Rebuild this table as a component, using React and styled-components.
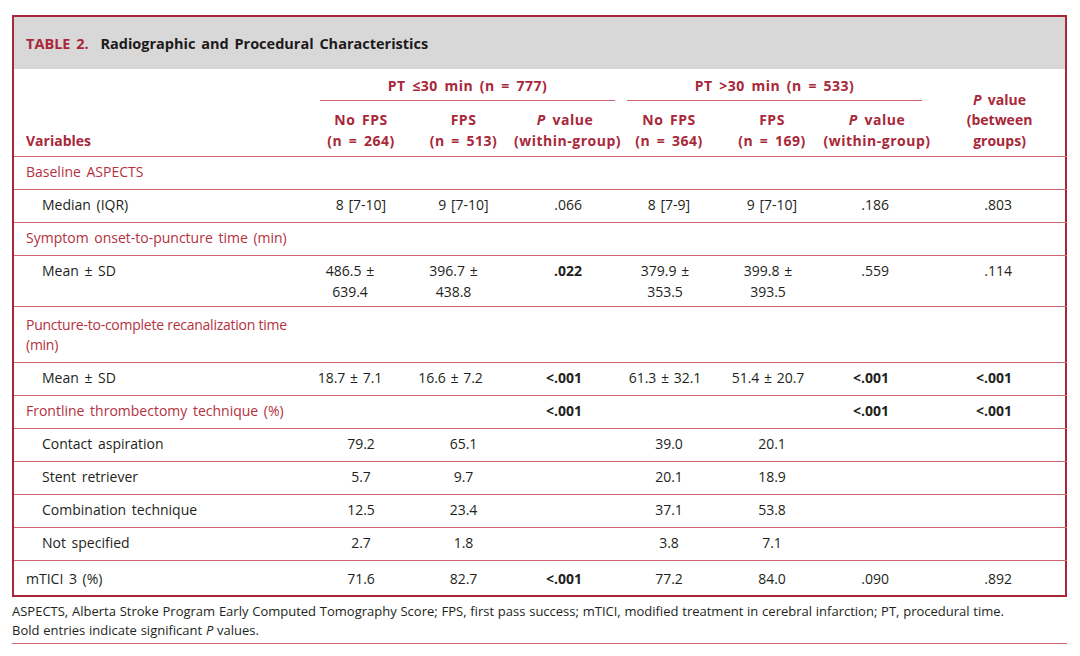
import React from "react";
import styled, { createGlobalStyle } from "styled-components";

const RED = "#a8283a";
const LINE = "#cf6670";

const GlobalStyle = createGlobalStyle`
  body {
    margin: 0;
    background: #fff;
    font-family: "Open Sans", "Liberation Sans", sans-serif;
    color: #231f20;
  }
`;

// right padding for the P value columns (decimal aligned), 0 = centred
const pPad = [0, 0, 34, 0, 0, 43, 55];

const rows = [
  { kind: "section", label: "Baseline ASPECTS" },
  { label: "Median (IQR)", values: ["8 [7-10]", "9 [7-10]", ".066", "8 [7-9]", "9 [7-10]", ".186", ".803"] },
  { kind: "section", label: "Symptom onset-to-puncture time (min)" },
  {
    label: "Mean ± SD",
    values: ["486.5 ±\n639.4", "396.7 ±\n438.8", ".022", "379.9 ±\n353.5", "399.8 ±\n393.5", ".559", ".114"],
    bold: [2],
    shift: [22, 20, 0, 8, 8, 0, 0],
    pad: "4px 0 4px",
    lh: 21,
  },
  {
    kind: "section",
    label: "Puncture-to-complete recanalization time\n(min)",
    tight: true,
    pad: "8px 0 8px",
    lh: 19.5,
  },
  {
    label: "Mean ± SD",
    values: ["18.7 ± 7.1", "16.6 ± 7.2", "<.001", "61.3 ± 32.1", "51.4 ± 20.7", "<.001", "<.001"],
    bold: [2, 5, 6],
    shift: [22, 26, 0, 8, 8, 0, 0],
  },
  {
    kind: "section",
    label: "Frontline thrombectomy technique (%)",
    values: ["", "", "<.001", "", "", "<.001", "<.001"],
    bold: [2, 5, 6],
  },
  { label: "Contact aspiration", values: ["79.2", "65.1", "", "39.0", "20.1", "", ""] },
  { label: "Stent retriever", values: ["5.7", "9.7", "", "20.1", "18.9", "", ""] },
  { label: "Combination technique", values: ["12.5", "23.4", "", "37.1", "53.8", "", ""] },
  { label: "Not specified", values: ["2.7", "1.8", "", "3.8", "7.1", "", ""] },
  {
    kind: "plain",
    label: "mTICI 3 (%)",
    values: ["71.6", "82.7", "<.001", "77.2", "84.0", ".090", ".892"],
    bold: [2],
    last: true,
    pad: "8px 0 6px",
  },
];

const widths = [295, 104, 101, 102, 106, 100, 110, 135];

function PVal() {
  return (
    <>
      <i>P</i> value
    </>
  );
}

export default function App() {
  return (
    <>
      <GlobalStyle />
      <Page>
        <Frame>
          <TitleBar>
            <TableNo>TABLE 2.</TableNo> Radiographic and Procedural Characteristics
          </TitleBar>
          <Table>
            <colgroup>
              {widths.map((w, i) => (
                <col key={i} style={{ width: w }} />
              ))}
            </colgroup>
            <thead>
              <tr>
                <HeadCell rowSpan={2} $align="left">
                  Variables
                </HeadCell>
                <GroupCell colSpan={3}>
                  <GroupLabel $left="11px" $right="1px">
                    PT ≤30 min (n = 777)
                  </GroupLabel>
                </GroupCell>
                <GroupCell colSpan={3}>
                  <GroupLabel $left="11px" $right="10px">
                    PT &gt;30 min (n = 533)
                  </GroupLabel>
                </GroupCell>
                <HeadCell rowSpan={2}>
                  <PVal />
                  <br />
                  (between
                  <br />
                  groups)
                </HeadCell>
              </tr>
              <tr>
                <SubHead>
                  No FPS
                  <br />
                  (n = 264)
                </SubHead>
                <SubHead>
                  FPS
                  <br />
                  (n = 513)
                </SubHead>
                <SubHead>
                  <PVal />
                  <br />
                  (within-group)
                </SubHead>
                <SubHead>
                  No FPS
                  <br />
                  (n = 364)
                </SubHead>
                <SubHead>
                  FPS
                  <br />
                  (n = 169)
                </SubHead>
                <SubHead>
                  <PVal />
                  <br />
                  (within-group)
                </SubHead>
              </tr>
            </thead>
            <tbody>
              {rows.map((r, i) => (
                <Row key={i} $last={r.last}>
                  <LabelCell $kind={r.kind || "item"} $tight={r.tight} $pad={r.pad} $lh={r.lh}>
                    {r.label}
                  </LabelCell>
                  {widths.slice(1).map((_, j) => (
                    <ValueCell
                      key={j}
                      $bold={r.bold && r.bold.includes(j)}
                      $right={pPad[j]}
                      $shift={r.shift ? r.shift[j] : 0}
                      $pad={r.pad}
                      $lh={r.lh}
                    >
                      {r.values ? r.values[j] : ""}
                    </ValueCell>
                  ))}
                </Row>
              ))}
            </tbody>
          </Table>
        </Frame>
        <Notes>
          <NoteLine>
            ASPECTS, Alberta Stroke Program Early Computed Tomography Score; FPS, first pass success; mTICI, modified
            treatment in cerebral infarction; PT, procedural time.
          </NoteLine>
          <NoteLine>
            Bold entries indicate significant <i>P</i> values.
          </NoteLine>
        </Notes>
      </Page>
    </>
  );
}

const Page = styled.div`
  padding: 15px 13px 0 12px;
  width: 1055px;
`;

const Frame = styled.div`
  border: 2px solid ${RED};
`;

const TitleBar = styled.div`
  background: #d9d8d9;
  height: 52px;
  display: flex;
  align-items: center;
  gap: 6px;
  padding: 0 0 0 12px;
  box-sizing: border-box;
  font-size: 14.5px;
  font-weight: 700;
  word-spacing: 2px;
  color: #1e1a1b;
  white-space: pre;
`;

const TableNo = styled.span`
  color: ${RED};
`;

const Table = styled.table`
  width: 100%;
  table-layout: fixed;
  border-collapse: collapse;
  font-size: 14px;
`;

const HeadCell = styled.th`
  font-weight: 700;
  color: ${RED};
  line-height: 20.5px;
  word-spacing: 2.5px;
  vertical-align: bottom;
  text-align: ${(p) => p.$align || "center"};
  padding: 0 0 5px ${(p) => (p.$align === "left" ? "12px" : "0")};
  border-bottom: 1px solid ${LINE};
  white-space: nowrap;
`;

const GroupCell = styled.th`
  padding: 6px 0 0;
  vertical-align: top;
`;

const GroupLabel = styled.div`
  margin: 0 ${(p) => p.$right} 0 ${(p) => p.$left};
  padding-bottom: 4px;
  border-bottom: 1.5px solid ${LINE};
  font-weight: 700;
  color: ${RED};
  line-height: 21px;
  letter-spacing: 0.5px;
  word-spacing: 2.5px;
  text-align: center;
  white-space: nowrap;
`;

const SubHead = styled.th`
  font-weight: 700;
  color: ${RED};
  line-height: 20.5px;
  letter-spacing: 0.5px;
  word-spacing: 2.5px;
  padding: 9px 0 5px;
  text-align: center;
  vertical-align: bottom;
  border-bottom: 1px solid ${LINE};
  white-space: nowrap;
`;

const Row = styled.tr`
  border-bottom: ${(p) => (p.$last ? "none" : `1px solid ${LINE}`)};
`;

const LabelCell = styled.td`
  padding: ${(p) => p.$pad || "5px 0 7px"};
  padding-left: ${(p) => (p.$kind === "item" ? "28px" : "12px")};
  padding-right: 12px;
  line-height: ${(p) => p.$lh || 20}px;
  color: ${(p) => (p.$kind === "section" ? "#b43141" : "#231f20")};
  letter-spacing: ${(p) => (p.$tight ? "-0.25px" : "0")};
  word-spacing: ${(p) => (p.$tight ? "0" : "2px")};
  white-space: pre-line;
  vertical-align: top;
`;

const ValueCell = styled.td`
  padding: ${(p) => p.$pad || "5px 0 7px"};
  padding-right: ${(p) => (p.$right ? p.$right : p.$shift)}px;
  line-height: ${(p) => p.$lh || 20}px;
  word-spacing: 1px;
  text-align: ${(p) => (p.$right ? "right" : "center")};
  font-weight: ${(p) => (p.$bold ? 700 : 400)};
  white-space: pre-line;
  vertical-align: top;
`;

const Notes = styled.div`
  padding: 5px 0 3px;
  border-bottom: 1px solid ${LINE};
  font-size: 13px;
  line-height: 19px;
  color: #231f20;
`;

const NoteLine = styled.div`
  word-spacing: 0.4px;
`;
